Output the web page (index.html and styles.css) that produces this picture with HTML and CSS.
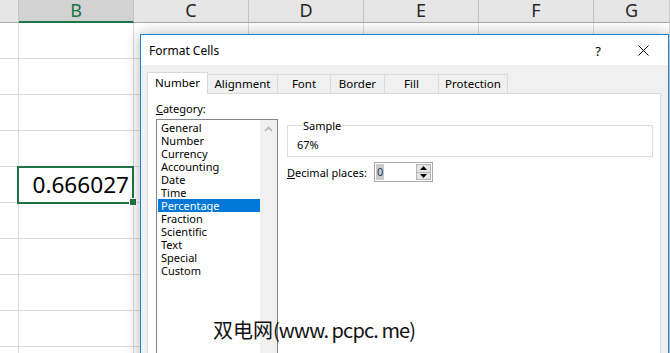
FILE: index.html
```html
<!DOCTYPE html>
<html lang="en">
<head>
  <meta charset="UTF-8">
  <meta name="viewport" content="width=device-width, initial-scale=1.0">
  <title>Format Cells</title>
  <link rel="stylesheet" href="styles.css">
</head>
<body>
  <div class="sheet">
    <div class="col-head"></div>
    <div class="col-head active">B</div>
    <div class="col-head">C</div>
    <div class="col-head">D</div>
    <div class="col-head">E</div>
    <div class="col-head">F</div>
    <div class="col-head">G</div>

    <div class="cell"></div><div class="cell"></div><div class="cell"></div><div class="cell"></div><div class="cell"></div><div class="cell"></div><div class="cell"></div>
    <div class="cell"></div><div class="cell"></div><div class="cell"></div><div class="cell"></div><div class="cell"></div><div class="cell"></div><div class="cell"></div>
    <div class="cell"></div><div class="cell"></div><div class="cell"></div><div class="cell"></div><div class="cell"></div><div class="cell"></div><div class="cell"></div>
    <div class="cell"></div><div class="cell"></div><div class="cell"></div><div class="cell"></div><div class="cell"></div><div class="cell"></div><div class="cell"></div>
    <div class="cell"></div><div class="cell selected">0.666027</div><div class="cell"></div><div class="cell"></div><div class="cell"></div><div class="cell"></div><div class="cell"></div>
    <div class="cell"></div><div class="cell"></div><div class="cell"></div><div class="cell"></div><div class="cell"></div><div class="cell"></div><div class="cell"></div>
    <div class="cell"></div><div class="cell"></div><div class="cell"></div><div class="cell"></div><div class="cell"></div><div class="cell"></div><div class="cell"></div>
    <div class="cell"></div><div class="cell"></div><div class="cell"></div><div class="cell"></div><div class="cell"></div><div class="cell"></div><div class="cell"></div>
    <div class="cell"></div><div class="cell"></div><div class="cell"></div><div class="cell"></div><div class="cell"></div><div class="cell"></div><div class="cell"></div>
    <div class="cell"></div><div class="cell"></div><div class="cell"></div><div class="cell"></div><div class="cell"></div><div class="cell"></div><div class="cell"></div>
  </div>

  <div class="dialog">
    <div class="titlebar">
      <div class="title">Format Cells</div>
      <div class="help">?</div>
      <div class="close">
        <svg width="11" height="11" viewBox="0 0 11 11">
          <path d="M0.5 0.5 L10.5 10.5 M10.5 0.5 L0.5 10.5" stroke="#000" stroke-width="1" fill="none" />
        </svg>
      </div>
    </div>

    <div class="dialog-body">
      <div class="tabs">
        <div class="tab active" style="width: 61px;">Number</div>
        <div class="tab" style="width: 71px;">Alignment</div>
        <div class="tab" style="width: 54px;">Font</div>
        <div class="tab" style="width: 55px;">Border</div>
        <div class="tab" style="width: 55px;">Fill</div>
        <div class="tab" style="width: 70px;">Protection</div>
      </div>

      <div class="panel">
        <div class="category">
          <div class="label"><u>C</u>ategory:</div>
          <div class="listbox">
            <div class="items">
              <div class="item">General</div>
              <div class="item">Number</div>
              <div class="item">Currency</div>
              <div class="item">Accounting</div>
              <div class="item">Date</div>
              <div class="item">Time</div>
              <div class="item selected">Percentage</div>
              <div class="item">Fraction</div>
              <div class="item">Scientific</div>
              <div class="item">Text</div>
              <div class="item">Special</div>
              <div class="item">Custom</div>
            </div>
            <div class="scrollbar">
              <svg width="9" height="6" viewBox="0 0 9 6">
                <path d="M1 5 L4.5 1.5 L8 5" stroke="#b4b4b4" stroke-width="1.6" fill="none" />
              </svg>
            </div>
          </div>
        </div>

        <div class="options">
          <fieldset class="sample">
            <legend>Sample</legend>
            <div class="sample-value">67%</div>
          </fieldset>

          <div class="decimal-row">
            <div class="label"><u>D</u>ecimal places:</div>
            <div class="spinbox">
              <div class="value"><span>0</span></div>
              <div class="spin-buttons">
                <div class="spin-btn">
                  <svg width="7" height="4" viewBox="0 0 7 4"><path d="M0 4 L3.5 0 L7 4 Z" fill="#000" /></svg>
                </div>
                <div class="spin-btn">
                  <svg width="7" height="4" viewBox="0 0 7 4"><path d="M0 0 L3.5 4 L7 0 Z" fill="#000" /></svg>
                </div>
              </div>
            </div>
          </div>
        </div>
      </div>
    </div>
  </div>

  <div class="watermark">双电网<span class="latin">(www. pcpc. me)</span></div>
</body>
</html>
```

FILE: styles.css
```css
* {
  box-sizing: border-box;
  margin: 0;
  padding: 0;
}

body {
  width: 670px;
  height: 353px;
  overflow: hidden;
  position: relative;
  background: #ffffff;
  font-family: "Noto Sans", sans-serif;
}

.sheet {
  display: grid;
  grid-template-columns: 19px repeat(5, 115px) 1fr;
  grid-template-rows: 23px;
  grid-auto-rows: 36px;

  & > .col-head {
    background-color: #e6e6e6;
    border-right: 1px solid #c4c4c4;
    border-bottom: 1px solid #ababab;
    font-size: 18px;
    line-height: 20px;
    text-align: center;
    color: #262626;

    &.active {
      background-color: #d2d2d2;
      color: #217346;
      border-bottom: 2px solid #217346;
    }
  }

  & > .cell {
    border-right: 1px solid #dadada;
    border-bottom: 1px solid #dadada;

    &.selected {
      position: relative;
      font-size: 22.6px;
      line-height: 35px;
      text-align: right;
      padding-right: 4px;
      color: #000;

      &::before {
        content: "";
        position: absolute;
        top: -1px;
        left: -2px;
        right: -1px;
        bottom: -2px;
        border: 2px solid #217346;
      }

      &::after {
        content: "";
        position: absolute;
        right: -4px;
        bottom: -4px;
        width: 6px;
        height: 6px;
        background-color: #217346;
        border: 1px solid #ffffff;
      }
    }
  }
}

.dialog {
  position: absolute;
  left: 140px;
  top: 34px;
  width: 529px;
  height: 340px;
  display: flex;
  flex-direction: column;
  background-color: #f0f0f0;
  border: 1px solid #1883d7;
  box-shadow: 0 0 14px rgba(0, 0, 0, 0.28);
  color: #000;

  & > .titlebar {
    height: 30px;
    flex-shrink: 0;
    background-color: #ffffff;
    display: flex;
    align-items: center;
    font-size: 12px;

    & > .title {
      flex: 1;
      padding-left: 8px;
    }

    & > .help {
      width: 44px;
      text-align: center;
      font-size: 13px;
      margin-top: 1px;
    }

    & > .close {
      width: 46px;
      height: 30px;
      display: flex;
      align-items: center;
      justify-content: center;
      margin-right: 2px;
    }
  }

  & > .dialog-body {
    flex: 1;
    display: flex;
    flex-direction: column;
    padding: 7px 7px 0 6px;
  }
}

.tabs {
  display: flex;
  align-items: flex-end;
  height: 21px;
  position: relative;
  z-index: 1;

  & > .tab {
    height: 19px;
    margin-left: -1px;
    border: 1px solid #d9d9d9;
    border-bottom: none;
    font-size: 11.5px;
    line-height: 17px;
    text-align: center;

    &:first-child {
      margin-left: 0;
    }

    &.active {
      height: 22px;
      margin-bottom: -1px;
      line-height: 19px;
      background-color: #ffffff;
    }
  }
}

.panel {
  flex: 1;
  display: flex;
  gap: 9px;
  padding: 7px 7px 0 8px;
  background-color: #ffffff;
  border: 1px solid #d9d9d9;
  font-size: 11px;
  line-height: 15px;

  & > .category {
    width: 122px;
    display: flex;
    flex-direction: column;

    & > .label {
      margin-bottom: 3px;
    }
  }

  & > .options {
    flex: 1;
    display: flex;
    flex-direction: column;
    margin-top: 17px;
  }
}

.listbox {
  height: 250px;
  display: flex;
  border: 1px solid #828790;

  & > .items {
    flex: 1;
    padding-top: 1px;

    .item {
      height: 13px;
      line-height: 13px;
      padding-left: 3px;
      margin-left: 1px;

      &.selected {
        background-color: #0078d7;
        color: #ffffff;
      }
    }
  }

  & > .scrollbar {
    width: 17px;
    background-color: #f0f0f0;
    display: flex;
    justify-content: center;
    padding-top: 6px;
  }
}

.sample {
  border: 1px solid #dcdcdc;
  padding: 4px 8px 4px 9px;

  & > legend {
    margin-left: 5px;
    padding: 0 1px;
    line-height: 15px;
  }
}

.decimal-row {
  display: flex;
  align-items: center;
  margin-top: 5px;

  & > .label {
    width: 87px;
    white-space: nowrap;
  }

  & > .spinbox {
    width: 59px;
    height: 20px;
    display: flex;
    border: 1px solid #a9a9a9;

    & > .value {
      flex: 1;
      padding: 1px 0 1px 1px;

      & > span {
        display: inline-block;
        height: 16px;
        line-height: 16px;
        padding: 0 1px;
        background-color: #cccccc;
        color: #1e3a5f;
      }
    }

    & > .spin-buttons {
      width: 16px;
      display: flex;
      flex-direction: column;
      padding: 1px 1px 1px 0;

      .spin-btn {
        flex: 1;
        display: flex;
        align-items: center;
        justify-content: center;
        background-color: #e5e5e5;
        border: 1px solid #b4b4b4;

        & + .spin-btn {
          border-top: none;
        }
      }
    }
  }
}

.watermark {
  position: absolute;
  left: 213px;
  top: 320px;
  font-family: "Noto Sans CJK SC", sans-serif;
  font-size: 20px;
  line-height: 20px;
  color: #111111;
  white-space: nowrap;

  & > .latin {
    letter-spacing: -0.9px;
  }
}
```
